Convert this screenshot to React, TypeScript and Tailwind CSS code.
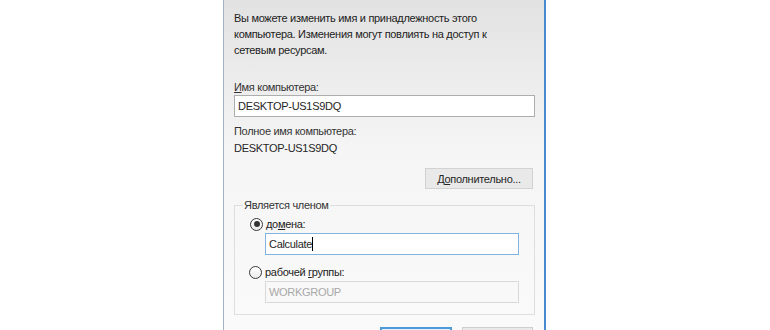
export default function App() {
  return (
    <div
      className="w-[770px] h-[330px] bg-white overflow-hidden flex"
      style={{ fontFamily: '"Liberation Sans", Arial, sans-serif' }}
    >
      <div className="ml-[223px] w-[323px] h-[330px] shrink-0 overflow-hidden border-l border-l-[#a3b1c2] border-r-2 border-r-[#4a89d0] bg-gradient-to-b from-[#e2e2e2] via-[#f5f5f5] via-45% to-[#fafafa] pl-[10px] pr-[9px] pt-[10px] text-[11px] tracking-[-0.3px] leading-[16px] text-[#222] flex flex-col">
        <p className="shrink-0">
          Вы можете изменить имя и принадлежность этого
          <br />
          компьютера. Изменения могут повлиять на доступ к
          <br />
          сетевым ресурсам.
        </p>

        <div className="shrink-0 mt-[22px] leading-[15px] text-[#333]">
          <span className="underline">И</span>мя компьютера:
        </div>
        <div className="shrink-0 h-[22px] border border-[#adadad] bg-white px-[3px] flex items-center text-[#252525]">
          DESKTOP-US1S9DQ
        </div>

        <div className="shrink-0 mt-[6px] text-[#333]">Полное имя компьютера:</div>
        <div className="shrink-0 mt-[1px] text-[#252525]">DESKTOP-US1S9DQ</div>

        <div className="shrink-0 mt-[12px] self-end mr-[2px] w-[108px] h-[21px] bg-[#e9e9e9] border border-[#d2d2d2] flex items-center justify-center text-[#252525]">
          Д<span className="underline">о</span>полнительно...
        </div>

        <fieldset className="shrink-0 mt-[8px] border border-[#dedede] px-0 pb-[11px]">
          <legend className="ml-[8px] px-[1px] leading-[16px] text-[#333]">Является членом</legend>

          <div className="mt-[3px] h-[16px] flex items-center pl-[15px]">
            <span className="w-[13px] h-[13px] rounded-full border border-[#3a3a3a] bg-gradient-to-b from-white to-[#ececec] flex items-center justify-center">
              <span className="w-[6px] h-[6px] rounded-full bg-[#333]" />
            </span>
            <span className="ml-[3px]">
              до<span className="underline">м</span>ена:
            </span>
          </div>
          <div className="mt-[1px] ml-[30px] w-[254px] h-[22px] border border-[#84b3e2] bg-white px-[3px] flex items-center text-[#252525]">
            Calculate
            <span className="inline-block w-[1px] h-[14px] bg-black" />
          </div>

          <div className="mt-[9px] h-[16px] flex items-center pl-[14px]">
            <span className="w-[13px] h-[13px] rounded-full border border-[#3a3a3a] bg-gradient-to-b from-white to-[#ececec]" />
            <span className="ml-[3px]">
              рабочей <span className="underline">г</span>руппы:
            </span>
          </div>
          <div className="mt-[1px] ml-[30px] w-[254px] h-[22px] border border-[#d8d8d8] bg-[#f8f8f8] px-[3px] flex items-center text-[#a8a8a8]">
            WORKGROUP
          </div>
        </fieldset>

        <div className="shrink-0 mt-[12px] mr-[2px] flex justify-end gap-[10px]">
          <div className="w-[72px] h-[23px] border-2 border-[#4f9ad8] bg-[#e6f0fa]" />
          <div className="w-[71px] h-[23px] border border-[#cfcfcf] bg-[#eaeaea]" />
        </div>
      </div>
    </div>
  );
}
